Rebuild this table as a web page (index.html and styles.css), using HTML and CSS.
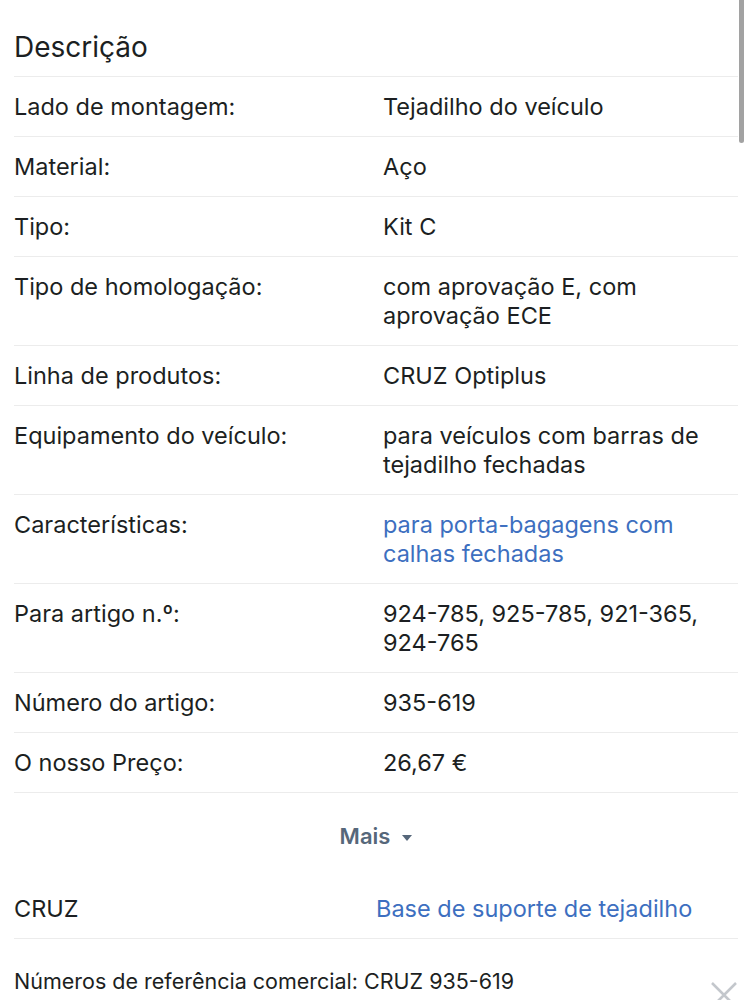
FILE: index.html
```html
<!DOCTYPE html>
<html lang="pt">
<head>
<meta charset="utf-8">
<title>Descrição</title>
<link rel="stylesheet" href="styles.css">
</head>
<body>
<div class="scrollbar"></div>
<main class="page">
  <h2 class="title">Descrição</h2>
  <dl class="specs">
    <div class="row"><dt>Lado de montagem:</dt><dd>Tejadilho do veículo</dd></div>
    <div class="row"><dt>Material:</dt><dd>Aço</dd></div>
    <div class="row"><dt>Tipo:</dt><dd>Kit C</dd></div>
    <div class="row"><dt>Tipo de homologação:</dt><dd>com aprovação E, com aprovação ECE</dd></div>
    <div class="row"><dt>Linha de produtos:</dt><dd>CRUZ Optiplus</dd></div>
    <div class="row"><dt>Equipamento do veículo:</dt><dd>para veículos com barras de tejadilho fechadas</dd></div>
    <div class="row"><dt>Características:</dt><dd class="link">para porta-bagagens com calhas fechadas</dd></div>
    <div class="row"><dt>Para artigo n.º:</dt><dd><span class="nw">924-785,</span> <span class="nw">925-785,</span> <span class="nw">921-365,</span> <span class="nw">924-765</span></dd></div>
    <div class="row"><dt>Número do artigo:</dt><dd>935-619</dd></div>
    <div class="row"><dt>O nosso Preço:</dt><dd>26,67 €</dd></div>
  </dl>
  <div class="more"><span>Mais</span><span class="caret"></span></div>
  <div class="brand-row">
    <span class="brand">CRUZ</span>
    <span class="link">Base de suporte de tejadilho</span>
  </div>
  <div class="refs">
    <span>Números de referência comercial: CRUZ 935-619</span>
    <svg class="close" viewBox="0 0 28 28" width="28" height="28"><path d="M2 2 L26 26 M26 2 L2 26" stroke="#c3c7cc" stroke-width="2.5" fill="none"/></svg>
  </div>
</main>
</body>
</html>
```
FILE: styles.css
```css
html, body {
  margin: 0;
  padding: 0;
  background: #ffffff;
}
body {
  font-family: Inter, "Noto Sans", sans-serif;
  color: #1c1f22;
  font-size: 23.5px;
  line-height: 29px;
  overflow: hidden;
}
.scrollbar {
  position: fixed;
  top: 0;
  left: 739px;
  width: 5px;
  height: 143px;
  background: #a2a2a2;
  border-radius: 0 0 3px 3px;
}
.page {
  width: 724px;
  padding: 0 13px 0 14px;
}
.title {
  margin: 0;
  font-size: 28px;
  font-weight: 400;
  line-height: 32px;
  padding: 31px 0 13px;
  border-bottom: 1px solid #ececec;
}
.specs {
  margin: 0;
}
.row {
  display: grid;
  grid-template-columns: 369px 1fr;
  padding: 15px 0;
  border-bottom: 1px solid #ececec;
}
.row dt, .row dd {
  margin: 0;
}
.nw {
  white-space: nowrap;
}
.link {
  color: #3d6fc0;
}
.more {
  display: flex;
  justify-content: center;
  align-items: center;
  gap: 12px;
  padding: 29px 0 28px;
  color: #56677a;
  font-weight: 600;
  font-size: 22px;
}
.caret {
  width: 0;
  height: 0;
  border-left: 5px solid transparent;
  border-right: 5px solid transparent;
  border-top: 6px solid #56677a;
  margin-top: 2px;
}
.brand-row {
  display: grid;
  grid-template-columns: 362px 1fr;
  padding: 15px 0;
  border-bottom: 1px solid #ececec;
}
.refs {
  display: flex;
  justify-content: space-between;
  align-items: flex-start;
  padding-top: 28px;
  font-size: 21.5px;
}
.close {
  margin-top: 14px;
}
```
